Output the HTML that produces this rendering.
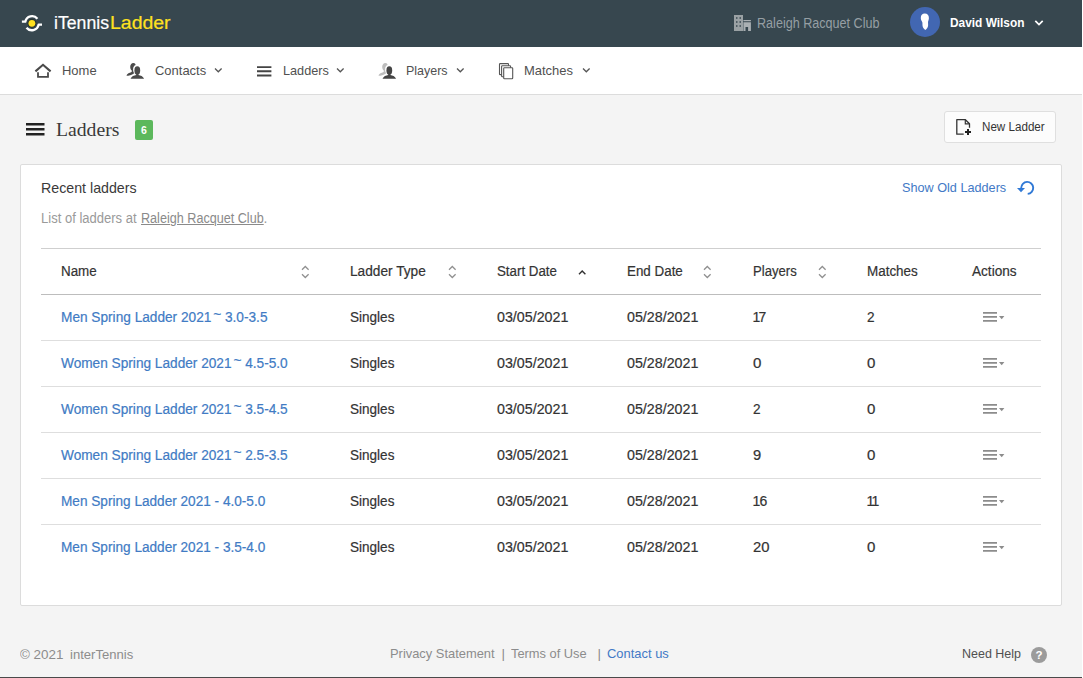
<!DOCTYPE html>
<html>
<head>
<meta charset="utf-8">
<title>Ladders</title>
<style>
*{box-sizing:border-box;margin:0;padding:0}
html,body{width:1083px;height:678px;overflow:hidden;background:#fff}
body{font-family:"Liberation Sans",sans-serif;color:#333;position:relative}
#app{position:absolute;left:0;top:0;width:1082px;height:678px;background:#f4f4f4;overflow:hidden}
.abs{position:absolute;white-space:nowrap}
.tx{position:absolute;white-space:nowrap;transform-origin:0 50%;display:block}
#topbar{position:absolute;left:0;top:0;width:1082px;height:47px;background:#37474f}
#navbar{position:absolute;left:0;top:47px;width:1082px;height:48px;background:#fff;border-bottom:1px solid #dcdcdc}
#card{position:absolute;left:20px;top:164px;width:1042px;height:442px;background:#fff;border:1px solid #dcdcdc;border-radius:2px}
.hline{position:absolute;left:41px;width:1000px;height:1px;background:#dedede}
svg{position:absolute;overflow:visible}
#bottomline{position:absolute;left:0;top:677px;width:1082px;height:1px;background:#4a4a4a}
</style>
</head>
<body>
<div id="app">
  <div id="topbar"></div>
  <div id="navbar"></div>
  <div id="card"></div>

  <!-- logo mark -->
  <svg style="left:21px;top:12px" width="22" height="22" viewBox="0 0 22 22">
    <circle cx="10.900" cy="11.300" r="4.500" fill="#27332f"/>
    <circle cx="10.900" cy="11.300" r="3.400" fill="#ffe11f"/>
    <path d="M0.900 9.700 H4.300 A6.900 6.900 0 0 1 16.400 6.700" fill="none" stroke="#fff" stroke-width="2.300" stroke-linecap="butt" stroke-linejoin="round"/>
    <path d="M21 12.700 H17.600 A6.900 6.900 0 0 1 5.500 15.700" fill="none" stroke="#fff" stroke-width="2.300" stroke-linecap="butt" stroke-linejoin="round"/>
  </svg>

  <!-- building -->
  <svg style="left:734px;top:15px" width="17" height="16" viewBox="0 0 17 16">
    <path fill="#9aa1a4" fill-rule="evenodd" d="M0 0h9v16H0z M2 2.200v1.500h1.500V2.200z M5.500 2.200v1.500H7V2.200z M2 6.200v1.500h1.500V6.200z M5.500 6.200v1.500H7V6.200z M2 10.200v1.500h1.500v-1.500z M5.500 10.200v1.500H7v-1.500z"/>
    <path fill="#aab0b3" d="M9.400 5h7.500v1.200H9.400z M9.400 7.300h7.500V16h-2.800v-4h-2.600v4H9.400z"/>
  </svg>

  <!-- avatar -->
  <div class="abs" style="left:910px;top:7px;width:30px;height:30px;border-radius:50%;background:#4267b2"></div>
  <svg style="left:920px;top:13px" width="10" height="18" viewBox="0 0 10 18"><path d="M4.800 0.600C7.400 0.600 8.900 2.400 8.900 5C8.900 6.600 8.400 7.400 8.100 8.600C7.900 9.600 8.200 11 8.100 12.600C8 14.600 6.400 16.200 5.400 17C4.200 16.200 2.600 14.600 2.500 12.400C2.400 11 2.600 10 2.200 9C1.600 7.800 0.800 6.800 0.800 5C0.800 2.400 2.200 0.600 4.800 0.600z" fill="#fff"/></svg>
  <svg style="left:1034px;top:19px" width="10" height="8" viewBox="0 0 10 8"><path d="M1.300 1.800l3.700 3.700l3.700-3.700" fill="none" stroke="#fff" stroke-width="1.700"/></svg>

  <!-- home -->
  <svg style="left:34px;top:63px" width="18" height="16" viewBox="0 0 18 16">
    <path d="M1.400 8.400L9 1.800l7.600 6.600" fill="none" stroke="#4a4a4a" stroke-width="2.100"/>
    <path d="M4 9.300v4.600h10V9.300" fill="none" stroke="#4a4a4a" stroke-width="1.800"/>
  </svg>

  <!-- contacts -->
  <svg style="left:126px;top:62px" width="19" height="18" viewBox="0 0 19 18">
    <g fill="#4a4a4a">
      <path d="M7.400 1C5.400 1 4.100 2.800 4.200 5.100c.1 1.700.7 2.900 1.700 3.600c0 .7-.2 1.200-.8 1.500C3.400 10.800 1.300 11.300.4 13.500c2 .4 4.200.1 5.800-.9c.9-.6 1.600-1 2.100-1.300C7.400 10.100 7 8.600 7.100 6.900c.1-1.900 1-3.300 2.500-3.900C9.500 1.900 8.700 1 7.400 1z"/>
      <ellipse cx="11.300" cy="8.400" rx="2.900" ry="4.200"/>
      <path d="M10.200 11.800h2.200v1.300c2.200.4 4.600 1.300 5.700 3.700H4.500c1.100-2.400 3.500-3.300 5.700-3.700z"/>
    </g>
  </svg>
  <!-- players -->
  <svg style="left:377.600px;top:62px" width="19" height="18" viewBox="0 0 19 18">
    <path fill="#bdbdbd" d="M7.400 1C5.400 1 4.100 2.800 4.200 5.100c.1 1.700.7 2.900 1.700 3.600c0 .7-.2 1.200-.8 1.500C3.400 10.800 1.300 11.300.4 13.500c2 .4 4.200.1 5.800-.9c.9-.6 1.600-1 2.100-1.300C7.400 10.100 7 8.600 7.100 6.900c.1-1.900 1-3.300 2.500-3.900C9.500 1.900 8.700 1 7.400 1z"/>
    <g fill="#444">
      <ellipse cx="11.300" cy="8.400" rx="2.900" ry="4.200"/>
      <path d="M10.200 11.800h2.200v1.300c2.200.4 4.600 1.300 5.700 3.700H4.500c1.100-2.400 3.500-3.300 5.700-3.700z"/>
    </g>
  </svg>
  <!-- ladders bars -->
  <svg style="left:257px;top:66px" width="15" height="11" viewBox="0 0 15 11"><path d="M0 1.100h14.400M0 5.300h14.400M0 9.500h14.400" stroke="#444" stroke-width="1.900" fill="none"/></svg>
  <!-- matches -->
  <svg style="left:498px;top:62px" width="16" height="18" viewBox="0 0 16 18">
    <g fill="#fff" stroke="#555" stroke-width="1.100">
      <rect x="1.500" y="1.600" width="9" height="11" rx="0.700"/>
      <rect x="3.600" y="3.700" width="9" height="11" rx="0.700"/>
      <rect x="5.700" y="5.800" width="9" height="11" rx="0.700"/>
    </g>
  </svg>
  <!-- nav chevrons -->
  <svg style="left:214px;top:67px" width="9" height="7" viewBox="0 0 9 7"><path d="M1 1.500l3.300 3.300l3.300-3.300" fill="none" stroke="#555" stroke-width="1.300"/></svg>
  <svg style="left:336px;top:67px" width="9" height="7" viewBox="0 0 9 7"><path d="M1 1.500l3.300 3.300l3.300-3.300" fill="none" stroke="#555" stroke-width="1.300"/></svg>
  <svg style="left:456px;top:67px" width="9" height="7" viewBox="0 0 9 7"><path d="M1 1.500l3.300 3.300l3.300-3.300" fill="none" stroke="#555" stroke-width="1.300"/></svg>
  <svg style="left:581.500px;top:67px" width="9" height="7" viewBox="0 0 9 7"><path d="M1 1.500l3.300 3.300l3.300-3.300" fill="none" stroke="#555" stroke-width="1.300"/></svg>

  <!-- title hamburger + badge -->
  <svg style="left:26px;top:122px" width="19" height="14" viewBox="0 0 19 14"><path d="M0 2.200h18.500M0 7.200h18.500M0 12.200h18.500" stroke="#222" stroke-width="2.500" fill="none"/></svg>
  <div class="abs" style="left:135px;top:120px;width:18px;height:20px;background:#5cb85c;border-radius:2px;color:#fff;font-size:10.500px;font-weight:bold;line-height:20px;text-align:center">6</div>

  <!-- new ladder button -->
  <div class="abs" style="left:944px;top:111px;width:112px;height:32px;background:#fcfcfc;border:1px solid #dfdfdf;border-radius:3px"></div>
  <svg style="left:956px;top:119px" width="16" height="17" viewBox="0 0 16 17">
    <path d="M7.700 15.200H0.800V0.700h8.600l4.100 4v4" fill="none" stroke="#333" stroke-width="1.300" stroke-linejoin="round"/>
    <path d="M9.300 0.800v4h4.100" fill="none" stroke="#333" stroke-width="1.200"/>
    <path d="M9 12.900h6M12 9.900v6" fill="none" stroke="#222" stroke-width="2"/>
  </svg>

  <!-- refresh -->
  <svg style="left:1016px;top:180px" width="20" height="16" viewBox="0 0 20 16">
    <path d="M5.200 8A6 6 0 1 1 11.700 13.900" fill="none" stroke="#3079d6" stroke-width="1.900"/>
    <path d="M1 8h8L5 12.200z" fill="#3079d6"/>
  </svg>

  <!-- table lines -->
  <div class="hline" style="top:248px;background:#cfcfcf"></div>
  <div class="hline" style="top:294px;background:#bdbdbd"></div>
  <div class="hline" style="top:340px"></div>
  <div class="hline" style="top:386px"></div>
  <div class="hline" style="top:432px"></div>
  <div class="hline" style="top:478px"></div>
  <div class="hline" style="top:524px"></div>

  <!-- sort icons -->
  <svg style="left:300.700px;top:265px" width="9" height="14" viewBox="0 0 9 14"><path d="M1 4.800L4.300 1.500L7.600 4.800M1 9.200L4.300 12.500L7.600 9.200" fill="none" stroke="#909090" stroke-width="1.250"/></svg>
  <svg style="left:447.500px;top:265px" width="9" height="14" viewBox="0 0 9 14"><path d="M1 4.800L4.300 1.500L7.600 4.800M1 9.200L4.300 12.500L7.600 9.200" fill="none" stroke="#909090" stroke-width="1.250"/></svg>
  <svg style="left:703.200px;top:265px" width="9" height="14" viewBox="0 0 9 14"><path d="M1 4.800L4.300 1.500L7.600 4.800M1 9.200L4.300 12.500L7.600 9.200" fill="none" stroke="#909090" stroke-width="1.250"/></svg>
  <svg style="left:817.700px;top:265px" width="9" height="14" viewBox="0 0 9 14"><path d="M1 4.800L4.300 1.500L7.600 4.800M1 9.200L4.300 12.500L7.600 9.200" fill="none" stroke="#909090" stroke-width="1.250"/></svg>
  <svg style="left:577.800px;top:268.600px" width="9" height="7" viewBox="0 0 9 7"><path d="M1 5.300L4.200 2.100L7.400 5.300" fill="none" stroke="#333" stroke-width="1.400"/></svg>

  <!-- action icons -->
  <svg style="left:983px;top:311.6px" width="22" height="10" viewBox="0 0 22 10"><path d="M0 0.900h14M0 4.900h14M0 8.900h14" stroke="#8c8c8c" stroke-width="1.600" fill="none"/><path d="M16 4h5.400L18.700 7.200z" fill="#8c8c8c"/></svg>
<svg style="left:983px;top:357.6px" width="22" height="10" viewBox="0 0 22 10"><path d="M0 0.900h14M0 4.900h14M0 8.900h14" stroke="#8c8c8c" stroke-width="1.600" fill="none"/><path d="M16 4h5.400L18.700 7.200z" fill="#8c8c8c"/></svg>
<svg style="left:983px;top:403.6px" width="22" height="10" viewBox="0 0 22 10"><path d="M0 0.900h14M0 4.900h14M0 8.900h14" stroke="#8c8c8c" stroke-width="1.600" fill="none"/><path d="M16 4h5.400L18.700 7.200z" fill="#8c8c8c"/></svg>
<svg style="left:983px;top:449.6px" width="22" height="10" viewBox="0 0 22 10"><path d="M0 0.900h14M0 4.900h14M0 8.900h14" stroke="#8c8c8c" stroke-width="1.600" fill="none"/><path d="M16 4h5.400L18.700 7.200z" fill="#8c8c8c"/></svg>
<svg style="left:983px;top:495.6px" width="22" height="10" viewBox="0 0 22 10"><path d="M0 0.900h14M0 4.900h14M0 8.900h14" stroke="#8c8c8c" stroke-width="1.600" fill="none"/><path d="M16 4h5.400L18.700 7.200z" fill="#8c8c8c"/></svg>
<svg style="left:983px;top:541.6px" width="22" height="10" viewBox="0 0 22 10"><path d="M0 0.900h14M0 4.900h14M0 8.900h14" stroke="#8c8c8c" stroke-width="1.600" fill="none"/><path d="M16 4h5.400L18.700 7.200z" fill="#8c8c8c"/></svg>

  <!-- help -->
  <div class="abs" style="left:1031px;top:647px;width:16px;height:16px;border-radius:50%;background:#9b9b9b;color:#fff;font-size:11.500px;font-weight:bold;line-height:17px;text-align:center">?</div>

<div class="tx" style="left:54.2px;top:13px;transform:scaleX(0.9816);font-size:18px;line-height:20px;color:#fff;-webkit-text-stroke:0.2px #fff">iTennis</div>
<div class="tx" style="left:109.6px;top:13px;transform:scaleX(1.0809);font-size:18px;line-height:20px;color:#ffe11f;-webkit-text-stroke:0.2px #ffe11f">Ladder</div>
<div class="tx" style="left:757px;top:14px;transform:scaleX(0.8994);font-size:14px;line-height:18px;color:#969fa4">Raleigh Racquet Club</div>
<div class="tx" style="left:950px;top:14px;transform:scaleX(0.8802);font-size:13.5px;line-height:18px;color:#fff;font-weight:bold">David Wilson</div>
<div class="tx" style="left:61.5px;top:62px;transform:scaleX(0.9607);font-size:13.5px;line-height:18px;color:#505050">Home</div>
<div class="tx" style="left:154.9px;top:62px;transform:scaleX(0.9609);font-size:13.5px;line-height:18px;color:#505050">Contacts</div>
<div class="tx" style="left:282.5px;top:62px;transform:scaleX(0.9406);font-size:13.5px;line-height:18px;color:#505050">Ladders</div>
<div class="tx" style="left:406.4px;top:62px;transform:scaleX(0.9241);font-size:13.5px;line-height:18px;color:#505050">Players</div>
<div class="tx" style="left:524.4px;top:62px;transform:scaleX(0.9602);font-size:13.5px;line-height:18px;color:#505050">Matches</div>
<div class="tx" style="left:55.5px;top:117px;transform:scaleX(0.9950);font-family:'Liberation Serif',serif;font-size:19.8px;line-height:24px;color:#3a3a3a">Ladders</div>
<div class="tx" style="left:981.7px;top:119px;transform:scaleX(0.9302);font-size:12.5px;line-height:17px;color:#333">New Ladder</div>
<div class="tx" style="left:41.3px;top:179px;transform:scaleX(0.9474);font-size:15px;line-height:18px;color:#3a3a3a">Recent ladders</div>
<div class="tx" id="lstA" style="left:40.9px;top:209.5px;transform:scaleX(0.9306);font-size:14px;line-height:16px;color:#9a9a9a">List of ladders at</div>
<div class="tx" id="lstB" style="left:140.7px;top:209.5px;transform:scaleX(0.9009);font-size:14px;line-height:16px;color:#8a8a8a;text-decoration:underline;text-decoration-thickness:1px;text-underline-offset:1px">Raleigh Racquet Club</div>
<div class="tx" id="lstC" style="left:263.6px;top:209.5px;font-size:14px;line-height:16px;color:#9a9a9a">.</div>
<div class="tx" style="left:902.1px;top:179px;transform:scaleX(0.9381);font-size:13.5px;line-height:18px;color:#4279c6">Show Old Ladders</div>
<div class="tx" style="left:60.9px;top:262px;transform:scaleX(0.9556);font-size:14px;line-height:18px;color:#333;-webkit-text-stroke:0.2px #333">Name</div>
<div class="tx" style="left:350.3px;top:262px;transform:scaleX(0.9769);font-size:14px;line-height:18px;color:#333;-webkit-text-stroke:0.2px #333">Ladder Type</div>
<div class="tx" style="left:497.3px;top:262px;transform:scaleX(0.9503);font-size:14px;line-height:18px;color:#333;-webkit-text-stroke:0.2px #333">Start Date</div>
<div class="tx" style="left:627.1px;top:262px;transform:scaleX(0.9559);font-size:14px;line-height:18px;color:#333;-webkit-text-stroke:0.2px #333">End Date</div>
<div class="tx" style="left:753.0px;top:262px;transform:scaleX(0.9360);font-size:14px;line-height:18px;color:#333;-webkit-text-stroke:0.2px #333">Players</div>
<div class="tx" style="left:867.1px;top:262px;transform:scaleX(0.9599);font-size:14px;line-height:18px;color:#333;-webkit-text-stroke:0.2px #333">Matches</div>
<div class="tx" style="left:972px;top:262px;transform:scaleX(0.9712);font-size:14px;line-height:18px;color:#333;-webkit-text-stroke:0.2px #333">Actions</div>
<div class="tx" style="left:60.6px;top:308px;transform:scaleX(0.9756);font-size:14px;line-height:18px;color:#417bc4;-webkit-text-stroke:0.2px #417bc4">Men Spring Ladder 2021 <span style="position:relative;top:-3px;margin-left:-2px;margin-right:0px;display:inline-block">~</span> 3.0-3.5</div>
<div class="tx" style="left:350.0px;top:308px;transform:scaleX(0.9669);font-size:14px;line-height:18px;color:#333;-webkit-text-stroke:0.2px #333">Singles</div>
<div class="tx" style="left:497.0px;top:308px;transform:scaleX(1.0189);font-size:14px;line-height:18px;color:#333;-webkit-text-stroke:0.2px #333">03/05/2021</div>
<div class="tx" style="left:627.2px;top:308px;transform:scaleX(1.0189);font-size:14px;line-height:18px;color:#333;-webkit-text-stroke:0.2px #333">05/28/2021</div>
<div class="tx" style="left:752.4px;top:308px;font-size:14px;line-height:18px;color:#333;-webkit-text-stroke:0.2px #333;letter-spacing:-1.8px">17</div>
<div class="tx" style="left:867.4px;top:308px;transform:scaleX(0.9747);font-size:14px;line-height:18px;color:#333;-webkit-text-stroke:0.2px #333">2</div>
<div class="tx" style="left:61.2px;top:354px;transform:scaleX(0.9754);font-size:14px;line-height:18px;color:#417bc4;-webkit-text-stroke:0.2px #417bc4">Women Spring Ladder 2021 <span style="position:relative;top:-3px;margin-left:-2px;margin-right:0px;display:inline-block">~</span> 4.5-5.0</div>
<div class="tx" style="left:350.0px;top:354px;transform:scaleX(0.9669);font-size:14px;line-height:18px;color:#333;-webkit-text-stroke:0.2px #333">Singles</div>
<div class="tx" style="left:497.0px;top:354px;transform:scaleX(1.0189);font-size:14px;line-height:18px;color:#333;-webkit-text-stroke:0.2px #333">03/05/2021</div>
<div class="tx" style="left:627.2px;top:354px;transform:scaleX(1.0189);font-size:14px;line-height:18px;color:#333;-webkit-text-stroke:0.2px #333">05/28/2021</div>
<div class="tx" style="left:753.4px;top:354px;transform:scaleX(1.0774);font-size:14px;line-height:18px;color:#333;-webkit-text-stroke:0.2px #333">0</div>
<div class="tx" style="left:867.4px;top:354px;transform:scaleX(1.0774);font-size:14px;line-height:18px;color:#333;-webkit-text-stroke:0.2px #333">0</div>
<div class="tx" style="left:61.2px;top:400px;transform:scaleX(0.9754);font-size:14px;line-height:18px;color:#417bc4;-webkit-text-stroke:0.2px #417bc4">Women Spring Ladder 2021 <span style="position:relative;top:-3px;margin-left:-2px;margin-right:0px;display:inline-block">~</span> 3.5-4.5</div>
<div class="tx" style="left:350.0px;top:400px;transform:scaleX(0.9669);font-size:14px;line-height:18px;color:#333;-webkit-text-stroke:0.2px #333">Singles</div>
<div class="tx" style="left:497.0px;top:400px;transform:scaleX(1.0189);font-size:14px;line-height:18px;color:#333;-webkit-text-stroke:0.2px #333">03/05/2021</div>
<div class="tx" style="left:627.2px;top:400px;transform:scaleX(1.0189);font-size:14px;line-height:18px;color:#333;-webkit-text-stroke:0.2px #333">05/28/2021</div>
<div class="tx" style="left:753.4px;top:400px;transform:scaleX(0.9747);font-size:14px;line-height:18px;color:#333;-webkit-text-stroke:0.2px #333">2</div>
<div class="tx" style="left:867.4px;top:400px;transform:scaleX(1.0774);font-size:14px;line-height:18px;color:#333;-webkit-text-stroke:0.2px #333">0</div>
<div class="tx" style="left:61.2px;top:446px;transform:scaleX(0.9754);font-size:14px;line-height:18px;color:#417bc4;-webkit-text-stroke:0.2px #417bc4">Women Spring Ladder 2021 <span style="position:relative;top:-3px;margin-left:-2px;margin-right:0px;display:inline-block">~</span> 2.5-3.5</div>
<div class="tx" style="left:350.0px;top:446px;transform:scaleX(0.9669);font-size:14px;line-height:18px;color:#333;-webkit-text-stroke:0.2px #333">Singles</div>
<div class="tx" style="left:497.0px;top:446px;transform:scaleX(1.0189);font-size:14px;line-height:18px;color:#333;-webkit-text-stroke:0.2px #333">03/05/2021</div>
<div class="tx" style="left:627.2px;top:446px;transform:scaleX(1.0189);font-size:14px;line-height:18px;color:#333;-webkit-text-stroke:0.2px #333">05/28/2021</div>
<div class="tx" style="left:753.4px;top:446px;transform:scaleX(1.0517);font-size:14px;line-height:18px;color:#333;-webkit-text-stroke:0.2px #333">9</div>
<div class="tx" style="left:867.4px;top:446px;transform:scaleX(1.0774);font-size:14px;line-height:18px;color:#333;-webkit-text-stroke:0.2px #333">0</div>
<div class="tx" style="left:60.6px;top:492px;transform:scaleX(0.9722);font-size:14px;line-height:18px;color:#417bc4;-webkit-text-stroke:0.2px #417bc4">Men Spring Ladder 2021 - 4.0-5.0</div>
<div class="tx" style="left:350.0px;top:492px;transform:scaleX(0.9669);font-size:14px;line-height:18px;color:#333;-webkit-text-stroke:0.2px #333">Singles</div>
<div class="tx" style="left:497.0px;top:492px;transform:scaleX(1.0189);font-size:14px;line-height:18px;color:#333;-webkit-text-stroke:0.2px #333">03/05/2021</div>
<div class="tx" style="left:627.2px;top:492px;transform:scaleX(1.0189);font-size:14px;line-height:18px;color:#333;-webkit-text-stroke:0.2px #333">05/28/2021</div>
<div class="tx" style="left:752.4px;top:492px;font-size:14px;line-height:18px;color:#333;-webkit-text-stroke:0.2px #333;letter-spacing:-0.6px">16</div>
<div class="tx" style="left:866.4px;top:492px;font-size:14px;line-height:18px;color:#333;-webkit-text-stroke:0.2px #333;letter-spacing:-1.6px">11</div>
<div class="tx" style="left:60.6px;top:538px;transform:scaleX(0.9722);font-size:14px;line-height:18px;color:#417bc4;-webkit-text-stroke:0.2px #417bc4">Men Spring Ladder 2021 - 3.5-4.0</div>
<div class="tx" style="left:350.0px;top:538px;transform:scaleX(0.9669);font-size:14px;line-height:18px;color:#333;-webkit-text-stroke:0.2px #333">Singles</div>
<div class="tx" style="left:497.0px;top:538px;transform:scaleX(1.0189);font-size:14px;line-height:18px;color:#333;-webkit-text-stroke:0.2px #333">03/05/2021</div>
<div class="tx" style="left:627.2px;top:538px;transform:scaleX(1.0189);font-size:14px;line-height:18px;color:#333;-webkit-text-stroke:0.2px #333">05/28/2021</div>
<div class="tx" style="left:753.4px;top:538px;transform:scaleX(1.0592);font-size:14px;line-height:18px;color:#333;-webkit-text-stroke:0.2px #333">20</div>
<div class="tx" style="left:867.4px;top:538px;transform:scaleX(1.0774);font-size:14px;line-height:18px;color:#333;-webkit-text-stroke:0.2px #333">0</div>
<div class="tx" style="left:20.3px;top:647px;transform:scaleX(0.9946);font-size:13.5px;line-height:16px;color:#8c8c8c">© 2021</div>
<div class="tx" style="left:69.7px;top:647px;transform:scaleX(0.9679);font-size:13.5px;line-height:16px;color:#8c8c8c">interTennis</div>
<div class="tx" style="left:389.8px;top:646px;transform:scaleX(0.9548);font-size:13.5px;line-height:16px;color:#8c8c8c">Privacy Statement</div>
<div class="tx" style="left:501.5px;top:646px;font-size:13.5px;line-height:16px;color:#8c8c8c">|</div>
<div class="tx" style="left:511.2px;top:646px;transform:scaleX(0.9518);font-size:13.5px;line-height:16px;color:#8c8c8c">Terms of Use</div>
<div class="tx" style="left:597.6px;top:646px;font-size:13.5px;line-height:16px;color:#8c8c8c">|</div>
<div class="tx" style="left:607.2px;top:646px;transform:scaleX(0.9574);font-size:13.5px;line-height:16px;color:#4279c6">Contact us</div>
<div class="tx" style="left:961.8px;top:646px;transform:scaleX(0.9248);font-size:13.5px;line-height:16px;color:#505050">Need Help</div>
  <div id="bottomline"></div>
</div>
</body>
</html>
